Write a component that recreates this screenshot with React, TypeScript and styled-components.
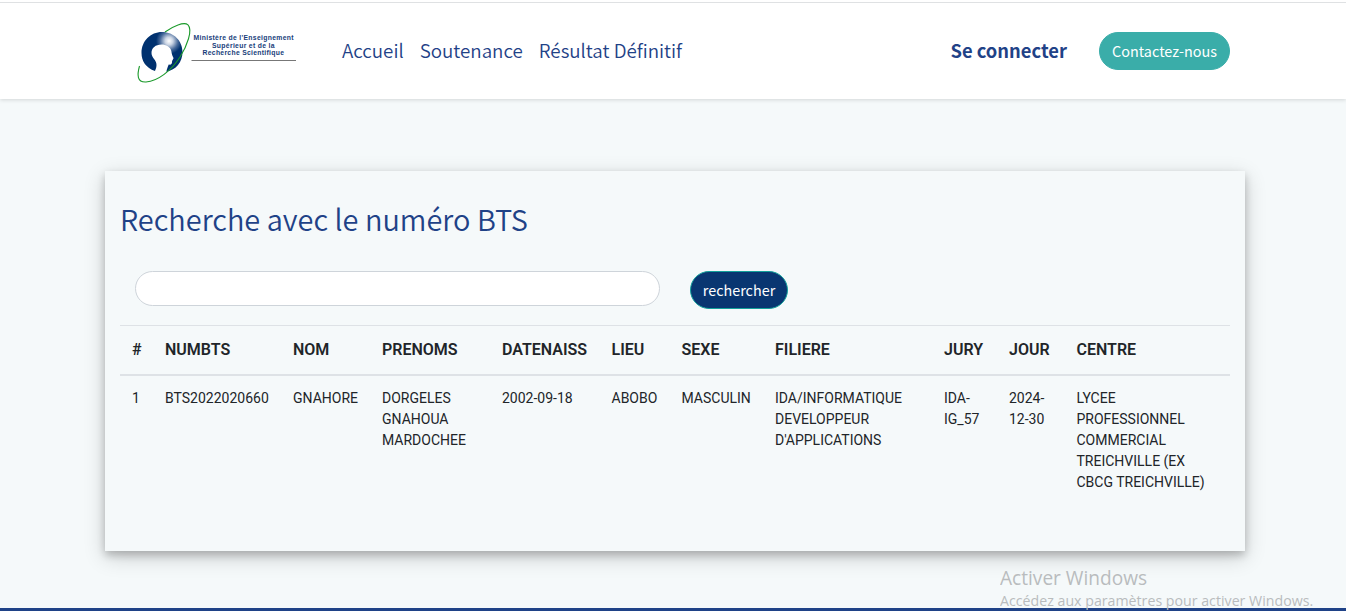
import React from 'react';
import styled, { createGlobalStyle } from 'styled-components';

const display = '"Noto Sans CJK SC", "Noto Sans CJK JP", "Noto Sans", sans-serif';

const GlobalStyle = createGlobalStyle`
  *, *::before, *::after { box-sizing: border-box; }
  body {
    margin: 0;
    background: #f5f9fa;
    color: #212529;
    font-family: Roboto, "Liberation Sans", sans-serif;
    font-size: 16px;
    line-height: 1.5;
    overflow: hidden;
  }
`;

const Page = styled.div`
  display: flex;
  flex-direction: column;
  height: 611px;
  overflow: hidden;
`;

const Header = styled.header`
  flex: none;
  height: 99px;
  margin-bottom: 72px;
  padding: 1px 116px 0;
  background: linear-gradient(#fff 2px, #dfe1e3 2px, #dfe1e3 3px, #fff 3px);
  box-shadow: 0 1px 4px rgba(0, 0, 0, 0.14);
  display: flex;
  align-items: center;
`;

const Logo = styled.svg`
  flex: none;
  width: 170px;
  height: 70px;
  margin: 5px 0 0 14px;
`;

const Nav = styled.nav`
  display: flex;
  gap: 16px;
  margin: 0 auto 0 42px;
`;

const NavLink = styled.a<{ $bold?: boolean }>`
  font-family: ${display};
  font-size: ${(p) => (p.$bold ? 18.35 : 18.75)}px;
  font-weight: ${(p) => (p.$bold ? 700 : 350)};
  line-height: 30px;
  white-space: nowrap;
  color: #1f4287;
`;

const Pill = styled.button<{ $variant: 'teal' | 'navy'; $width: number }>`
  flex: none;
  width: ${(p) => p.$width}px;
  height: 38px;
  padding: 0;
  border-radius: 19px;
  border: 1px solid ${(p) => (p.$variant === 'teal' ? '#3aada9' : '#12a19b')};
  background: ${(p) => (p.$variant === 'teal' ? '#3aada9' : '#093671')};
  color: #fff;
  font-family: ${display};
  font-size: 14.4px;
  line-height: 24px;
  white-space: nowrap;
`;

const ContactPill = styled(Pill)`
  margin-left: 32px;
  margin-top: 2px;
`;

const Card = styled.main`
  flex: none;
  width: 1140px;
  height: 380px;
  margin-left: 105px;
  padding: 28px 15px 0;
  background: #f5f9fa;
  box-shadow: 0 4px 8px 0 rgba(0, 0, 0, 0.2), 0 6px 20px 0 rgba(0, 0, 0, 0.19);
`;

const Title = styled.h2`
  margin: 0 0 34px;
  font-family: ${display};
  font-size: 28.95px;
  font-weight: 350;
  line-height: 38px;
  color: #1f4287;
  white-space: nowrap;
`;

const SearchRow = styled.form`
  display: flex;
  align-items: flex-start;
  gap: 30px;
  height: 54px;
  padding-left: 15px;
`;

const SearchInput = styled.input`
  width: 525px;
  height: 35px;
  padding: 0 16px;
  border: 1px solid #ced4da;
  border-radius: 18px;
  background: #fff;
  outline: none;
`;

const Table = styled.table`
  width: 1110px;
  table-layout: fixed;
  border-collapse: separate;
  border-spacing: 0;
`;

const HeadCell = styled.th`
  padding: 12px 0 12px 12px;
  border-top: 1px solid #dee2e6;
  border-bottom: 2px solid #dee2e6;
  font-size: 16px;
  font-weight: 600;
  line-height: 24px;
  text-align: left;
  white-space: nowrap;
`;

const Cell = styled.td`
  padding: 12px 0 12px 12px;
  font-size: 14px;
  font-weight: 400;
  line-height: 21px;
  vertical-align: top;
  white-space: pre;
`;

const Footer = styled.footer`
  flex: none;
  height: 3px;
  margin-top: auto;
  background: #1f4287;
`;

const Watermark = styled.aside`
  position: absolute;
  left: 1000px;
  top: 564px;
  height: 47px;
  overflow: hidden;
  color: #b9bcbe;
  font-family: "Open Sans", "Noto Sans", sans-serif;
  font-weight: 400;
  white-space: nowrap;
`;

const WatermarkTitle = styled.div`
  font-size: 19.1px;
  line-height: 28px;
`;

const WatermarkText = styled.div`
  font-size: 14.2px;
  line-height: 18px;
`;

const columns = [
  { title: '#', width: 33, value: '1' },
  { title: 'NUMBTS', width: 128, value: 'BTS2022020660' },
  { title: 'NOM', width: 89, value: 'GNAHORE' },
  { title: 'PRENOMS', width: 120, value: 'DORGELES\nGNAHOUA\nMARDOCHEE' },
  { title: 'DATENAISS', width: 109.5, value: '2002-09-18' },
  { title: 'LIEU', width: 70, value: 'ABOBO' },
  { title: 'SEXE', width: 93.5, value: 'MASCULIN' },
  { title: 'FILIERE', width: 169, value: "IDA/INFORMATIQUE\nDEVELOPPEUR\nD'APPLICATIONS" },
  { title: 'JURY', width: 65, value: 'IDA-\nIG_57' },
  { title: 'JOUR', width: 67.5, value: '2024-\n12-30' },
  {
    title: 'CENTRE',
    width: 165.5,
    value: 'LYCEE\nPROFESSIONNEL\nCOMMERCIAL\nTREICHVILLE (EX\nCBCG TREICHVILLE)',
  },
];

const MinistryLogo = () => (
  <Logo viewBox="130 18 170 70" role="img" aria-label="Ministère">
    <defs>
      <radialGradient id="shine" gradientUnits="userSpaceOnUse" cx="169" cy="41" r="13">
        <stop offset="0" stopColor="#fff" />
        <stop offset="0.3" stopColor="#cbd5e4" />
        <stop offset="0.7" stopColor="#446798" />
        <stop offset="1" stopColor="#00316f" />
      </radialGradient>
    </defs>
    <path
      d="M155 71 C146 68 141.500 61 141.500 53 C141.500 41 150.500 32 162 32 C174 32 182.500 41 182.500 52 C182.500 62 176 70 166.300 71.800 C167 69 167.700 67 168.700 64.500 C171 65 172.300 64 172 61.500 C172.500 59.500 173.500 59 173.500 58 C172.500 56 171.700 54 171.300 51 C170.500 47 166 44.500 161.500 44.500 C155.500 44.500 151.500 48 151.500 53 C151.500 58 156.700 60 156.500 65 C156.500 68 155.500 69 155 71 Z"
      fill="url(#shine)"
    />
    <path
      d="M165 32 C173 26 184 21.500 188 24.800 C193 30 187 46 180 57 C171 71 158 81 146 82 C137 82.500 137 75 139.500 66"
      fill="none"
      stroke="#1b9a2b"
      strokeWidth="1.1"
    />
    <g fill="#173d7a" fontFamily="Liberation Sans, Arial, sans-serif" fontWeight="700" fontSize="6.8">
      <text x="193.500" y="40" textLength="100" lengthAdjust="spacing">Ministère de l'Enseignement</text>
      <text x="212" y="47.500" textLength="62.500" lengthAdjust="spacing">Supérieur et de la</text>
      <text x="202.500" y="55" textLength="81.500" lengthAdjust="spacing">Recherche Scientifique</text>
    </g>
    <path d="M191.500 60.500 H296" stroke="#777" strokeWidth="1" />
  </Logo>
);

export default function App() {
  return (
    <>
      <GlobalStyle />
      <Page>
        <Header>
          <MinistryLogo />
          <Nav>
            <NavLink>Accueil</NavLink>
            <NavLink>Soutenance</NavLink>
            <NavLink>Résultat Définitif</NavLink>
          </Nav>
          <NavLink $bold>Se connecter</NavLink>
          <ContactPill $variant="teal" $width={131}>Contactez-nous</ContactPill>
        </Header>
        <Card>
          <Title>Recherche avec le numéro BTS</Title>
          <SearchRow>
            <SearchInput type="text" aria-label="Numéro BTS" />
            <Pill type="button" $variant="navy" $width={98}>rechercher</Pill>
          </SearchRow>
          <Table>
            <colgroup>
              {columns.map((c) => (
                <col key={c.title} width={c.width} />
              ))}
            </colgroup>
            <thead>
              <tr>
                {columns.map((c) => (
                  <HeadCell key={c.title}>{c.title}</HeadCell>
                ))}
              </tr>
            </thead>
            <tbody>
              <tr>
                {columns.map((c) => (
                  <Cell key={c.title}>{c.value}</Cell>
                ))}
              </tr>
            </tbody>
          </Table>
        </Card>
        <Footer />
      </Page>
      <Watermark>
        <WatermarkTitle>Activer Windows</WatermarkTitle>
        <WatermarkText>Accédez aux paramètres pour activer Windows.</WatermarkText>
      </Watermark>
    </>
  );
}
